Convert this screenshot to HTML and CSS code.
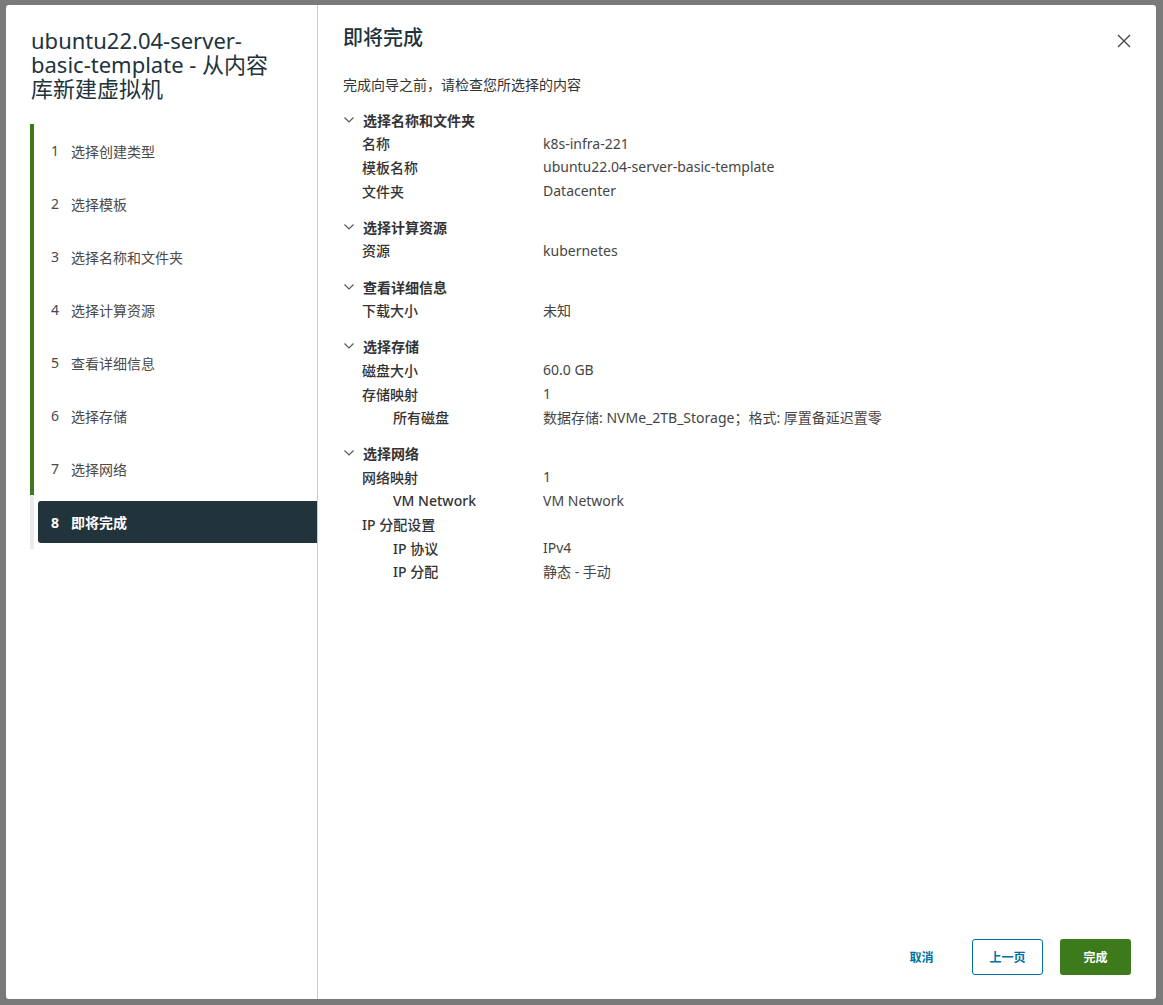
FILE: index.html
```html
<!DOCTYPE html>
<html lang="zh-CN">
<head>
    <meta charset="UTF-8">
    <meta name="viewport" content="width=device-width, initial-scale=1.0">
    <title>从内容库新建虚拟机</title>
    <link rel="stylesheet" href="styles.css">
</head>
<body>
    <div class="modal">
        <aside class="sidebar">
            <h2 class="wizard-title">ubuntu22.04-server-basic-template - 从内容库新建虚拟机</h2>
            <ol class="steps">
                <li class="step done"><span class="num">1</span>选择创建类型</li>
                <li class="step done"><span class="num">2</span>选择模板</li>
                <li class="step done"><span class="num">3</span>选择名称和文件夹</li>
                <li class="step done"><span class="num">4</span>选择计算资源</li>
                <li class="step done"><span class="num">5</span>查看详细信息</li>
                <li class="step done"><span class="num">6</span>选择存储</li>
                <li class="step done"><span class="num">7</span>选择网络</li>
                <li class="step current"><div class="step-inner"><span class="num">8</span>即将完成</div></li>
            </ol>
        </aside>

        <main class="content">
            <div class="content-head">
                <h3 class="page-title">即将完成</h3>
                <button class="close" aria-label="关闭">
                    <svg width="14" height="14" viewBox="0 0 14 14"><path d="M1 1L13 13M13 1L1 13" stroke="#4a4a4a" stroke-width="1.4" fill="none"/></svg>
                </button>
            </div>
            <p class="intro">完成向导之前，请检查您所选择的内容</p>

            <div class="review">
                <section class="group">
                    <div class="group-head"><svg class="chev" width="10" height="6" viewBox="0 0 10 6"><path d="M0.5 0.5L5 5L9.5 0.5" stroke="#555" stroke-width="1.1" fill="none"/></svg>选择名称和文件夹</div>
                    <div class="row"><span class="label">名称</span><span class="value">k8s-infra-221</span></div>
                    <div class="row"><span class="label">模板名称</span><span class="value">ubuntu22.04-server-basic-template</span></div>
                    <div class="row"><span class="label">文件夹</span><span class="value">Datacenter</span></div>
                </section>

                <section class="group">
                    <div class="group-head"><svg class="chev" width="10" height="6" viewBox="0 0 10 6"><path d="M0.5 0.5L5 5L9.5 0.5" stroke="#555" stroke-width="1.1" fill="none"/></svg>选择计算资源</div>
                    <div class="row"><span class="label">资源</span><span class="value">kubernetes</span></div>
                </section>

                <section class="group">
                    <div class="group-head"><svg class="chev" width="10" height="6" viewBox="0 0 10 6"><path d="M0.5 0.5L5 5L9.5 0.5" stroke="#555" stroke-width="1.1" fill="none"/></svg>查看详细信息</div>
                    <div class="row"><span class="label">下载大小</span><span class="value">未知</span></div>
                </section>

                <section class="group">
                    <div class="group-head"><svg class="chev" width="10" height="6" viewBox="0 0 10 6"><path d="M0.5 0.5L5 5L9.5 0.5" stroke="#555" stroke-width="1.1" fill="none"/></svg>选择存储</div>
                    <div class="row"><span class="label">磁盘大小</span><span class="value">60.0 GB</span></div>
                    <div class="row"><span class="label">存储映射</span><span class="value">1</span></div>
                    <div class="row sub"><span class="label">所有磁盘</span><span class="value">数据存储: NVMe_2TB_Storage；格式: 厚置备延迟置零</span></div>
                </section>

                <section class="group">
                    <div class="group-head"><svg class="chev" width="10" height="6" viewBox="0 0 10 6"><path d="M0.5 0.5L5 5L9.5 0.5" stroke="#555" stroke-width="1.1" fill="none"/></svg>选择网络</div>
                    <div class="row"><span class="label">网络映射</span><span class="value">1</span></div>
                    <div class="row sub"><span class="label">VM Network</span><span class="value">VM Network</span></div>
                    <div class="row"><span class="label">IP 分配设置</span><span class="value"></span></div>
                    <div class="row sub"><span class="label">IP 协议</span><span class="value">IPv4</span></div>
                    <div class="row sub"><span class="label">IP 分配</span><span class="value">静态 - 手动</span></div>
                </section>
            </div>

            <div class="footer">
                <button class="btn btn-link">取消</button>
                <button class="btn btn-outline">上一页</button>
                <button class="btn btn-primary">完成</button>
            </div>
        </main>
    </div>
</body>
</html>
```

FILE: styles.css
```css
* {
    box-sizing: border-box;
}
body {
    margin: 0;
    background-color: #7a7a7a;
    font-family: "Noto Sans", "Noto Sans CJK SC", sans-serif;
    color: #333;
}
.modal {
    display: flex;
    margin: 5px 0 0 6px;
    width: 1150px;
    height: 994px;
    background: #fff;
    border-radius: 3px;
    overflow: hidden;
}

/* left side: wizard title + stepper */
.sidebar {
    width: 312px;
    flex-shrink: 0;
    border-right: 1px solid #c5ccd1;
    padding: 23px 0 0 24px;
}
.wizard-title {
    width: 248px;
    margin: 0 0 24px 1px;
    font-size: 22px;
    line-height: 24px;
    font-weight: 400;
    color: #21333b;
}
.steps {
    list-style: none;
    margin: 0;
    padding: 0;
}
.step {
    display: flex;
    align-items: center;
    height: 53px;
    border-left: 4px solid #3d7a1c;
    padding-left: 17px;
    font-size: 14px;
    color: #4a4a4a;
}
.num {
    width: 20px;
}
.step.current {
    border-left-color: #e8ecef;
    padding: 6px 0 0 4px;
    height: 54px;
    align-items: flex-start;
}
.step-inner {
    display: flex;
    align-items: center;
    width: 100%;
    height: 42px;
    padding-left: 13px;
    background: #21333b;
    color: #fff;
    font-weight: 700;
    border-radius: 3px 0 0 3px;
}

/* right side: review page */
.content {
    flex: 1;
    display: flex;
    flex-direction: column;
    padding: 20px 25px 24px 25px;
}
.content-head {
    display: flex;
    justify-content: space-between;
    align-items: center;
}
.page-title {
    margin: 0;
    font-size: 20px;
    line-height: 26px;
    font-weight: 500;
    color: #21333b;
}
.close {
    border: none;
    background: none;
    padding: 0;
    margin: 8px 0 0 0;
    cursor: pointer;
}
.intro {
    margin: 24px 0 13px 0;
    font-size: 14px;
    line-height: 20px;
    color: #333;
}
.review {
    flex: 1;
    font-size: 14px;
}
.group {
    margin-bottom: 12.6px;
}
.group-head {
    display: flex;
    align-items: center;
    height: 23.6px;
    font-weight: 700;
    color: #333;
}
.chev {
    margin: 0 9px 0 1px;
}
.row {
    display: flex;
    height: 23.6px;
    align-items: center;
}
.label {
    width: 200px;
    padding-left: 19px;
    flex-shrink: 0;
    font-weight: 500;
    color: #333;
}
.row.sub .label {
    padding-left: 50px;
}
.value {
    color: #454545;
}

.footer {
    display: flex;
    justify-content: flex-end;
    align-items: center;
    gap: 17px;
}
.btn {
    height: 36px;
    min-width: 71px;
    font-family: inherit;
    font-size: 12px;
    font-weight: 700;
    border-radius: 3px;
    cursor: pointer;
}
.btn-link {
    border: none;
    background: none;
    color: #0072a3;
    margin-right: -2px;
}
.btn-outline {
    border: 1px solid #0072a3;
    background: #fff;
    color: #0072a3;
}
.btn-primary {
    border: none;
    background: #3d7a1c;
    color: #fff;
}
```
